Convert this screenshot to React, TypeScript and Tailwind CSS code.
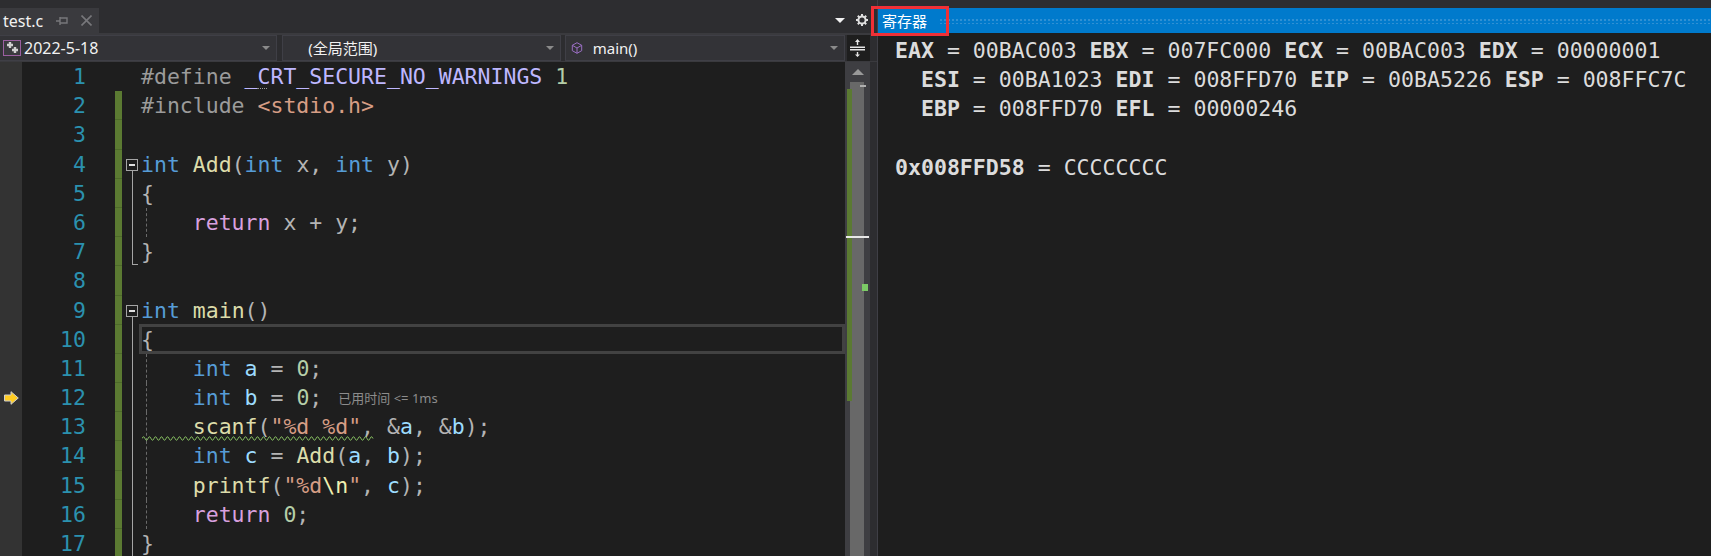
import React from 'react';

type Tok = [string, string];

const KW = 'text-[#569cd6]';
const FN = 'text-[#dcdcaa]';
const VAR = 'text-[#9cdcfe]';
const STR = 'text-[#d69d85]';
const NUM = 'text-[#b5cea8]';
const PRE = 'text-[#9b9b9b]';
const MAC = 'text-[#beb7ff]';
const CTL = 'text-[#d8a0df]';
const PUN = 'text-[#b4b4b4]';

type LineDef = {
  n: number;
  toks: Tok[];
  fold?: 'box' | 'line' | 'end';
  guide?: boolean;
  changed?: boolean;
};

const lines: LineDef[] = [
  { n: 1, toks: [['#define ', PRE], ['_CRT_SECURE_NO_WARNINGS', MAC], [' ', PUN], ['1', NUM]] },
  { n: 2, changed: true, toks: [['#include ', PRE], ['<stdio.h>', STR]] },
  { n: 3, changed: true, toks: [] },
  { n: 4, changed: true, fold: 'box', toks: [['int', KW], [' ', PUN], ['Add', FN], ['(', PUN], ['int', KW], [' x, ', PUN], ['int', KW], [' y)', PUN]] },
  { n: 5, changed: true, fold: 'line', toks: [['{', PUN]] },
  { n: 6, changed: true, fold: 'line', guide: true, toks: [['    ', PUN], ['return', CTL], [' x + y;', PUN]] },
  { n: 7, changed: true, fold: 'end', toks: [['}', PUN]] },
  { n: 8, changed: true, toks: [] },
  { n: 9, changed: true, fold: 'box', toks: [['int', KW], [' ', PUN], ['main', FN], ['()', PUN]] },
  { n: 10, changed: true, fold: 'line', toks: [['{', PUN]] },
  { n: 11, changed: true, fold: 'line', guide: true, toks: [['    ', PUN], ['int', KW], [' ', PUN], ['a', VAR], [' = ', PUN], ['0', NUM], [';', PUN]] },
  { n: 12, changed: true, fold: 'line', guide: true, toks: [['    ', PUN], ['int', KW], [' ', PUN], ['b', VAR], [' = ', PUN], ['0', NUM], [';', PUN]] },
  { n: 13, changed: true, fold: 'line', guide: true, toks: [['    ', PUN], ['scanf', FN], ['(', PUN], ['"%d %d"', STR], [', &', PUN], ['a', VAR], [', &', PUN], ['b', VAR], [');', PUN]] },
  { n: 14, changed: true, fold: 'line', guide: true, toks: [['    ', PUN], ['int', KW], [' ', PUN], ['c', VAR], [' = ', PUN], ['Add', FN], ['(', PUN], ['a', VAR], [', ', PUN], ['b', VAR], [');', PUN]] },
  { n: 15, changed: true, fold: 'line', guide: true, toks: [['    ', PUN], ['printf', FN], ['(', PUN], ['"%d', STR], ['\\n', 'text-[#efefb0]'], ['"', STR], [', ', PUN], ['c', VAR], [');', PUN]] },
  { n: 16, changed: true, fold: 'line', guide: true, toks: [['    ', PUN], ['return', CTL], [' ', PUN], ['0', NUM], [';', PUN]] },
  { n: 17, changed: true, fold: 'line', toks: [['}', PUN]] },
];

const Arrow = () => (
  <svg width="15" height="14" viewBox="0 0 15 14">
    <path d="M0.5 4h6.5V0.7L14.3 7 7 13.3V10H0.5z" fill="#ffcc22" stroke="#cfcfcf" strokeWidth="1" />
  </svg>
);

const FoldCell = ({ fold }: { fold?: LineDef['fold'] }) => (
  <div className="relative w-[17px] shrink-0 self-stretch">
    {fold === 'box' && (
      <>
        <div className="absolute left-[4px] top-[9px] flex h-[12px] w-[12px] items-center justify-center border border-[#a5a5a5]">
          <div className="h-[2px] w-[6px] bg-[#e0e0e0]" />
        </div>
        <div className="absolute bottom-0 left-[10px] top-[21px] w-px bg-[#a5a5a5]" />
      </>
    )}
    {fold === 'line' && <div className="absolute inset-y-0 left-[10px] w-px bg-[#a5a5a5]" />}
    {fold === 'end' && (
      <>
        <div className="absolute left-[10px] top-0 h-[27px] w-px bg-[#a5a5a5]" />
        <div className="absolute left-[10px] top-[27px] h-px w-[6px] bg-[#a5a5a5]" />
      </>
    )}
  </div>
);

const Squiggle = () => (
  <svg className="absolute left-[3px] top-[24px]" width="232" height="5" viewBox="0 0 232 5">
    <path
      d={'M0 2.5' + Array.from({ length: 77 }, (_, i) => ` q1.5 ${i % 2 ? 3.4 : -3.4} 3 0`).join('')}
      fill="none"
      stroke="#8cc665"
      strokeWidth="1"
    />
  </svg>
);

const CodeLine = ({ line }: { line: LineDef }) => (
  <div className="flex h-[29.2px] items-stretch">
    <div className="flex w-[22px] shrink-0 items-center justify-center bg-[#333333]">
      {line.n === 12 && <Arrow />}
    </div>
    <div className="w-[64px] shrink-0 text-right text-[#2b91af]">{line.n}</div>
    <div className="w-[29px] shrink-0" />
    <div className={`w-[7px] shrink-0 ${line.changed ? 'border-b border-[#4d6a2a] bg-[#5b7a32]' : ''}`} />
    <FoldCell fold={line.fold} />
    <div className="relative flex-1 whitespace-pre pl-[2px]">
      {line.guide && (
        <div className="absolute inset-y-0 left-[7px] border-l border-dashed border-[#6a6a6a]" />
      )}
      {line.n === 10 && (
        <div className="absolute inset-x-0 top-[-1px] h-[30px] border-[3px] border-[#424242]" />
      )}
      {line.toks.map(([t, c], i) => (
        <span key={i} className={`relative ${c}`}>
          {t}
        </span>
      ))}
      {line.n === 1 && (
        <div className="absolute left-[118px] top-[26px] h-px w-[10px] border-t border-dotted border-[#9a9a9a]" />
      )}
      {line.n === 12 && (
        <span className="ml-[16px] align-[2px] font-['Noto_Sans','Noto_Sans_CJK_SC',sans-serif] text-[13px] text-[#8c8c8c]">
          已用时间 {'<='} 1ms
        </span>
      )}
      {line.n === 13 && <Squiggle />}
    </div>
  </div>
);

const Scrollbar = () => (
  <div className="relative flex h-full w-[25px] shrink-0 flex-col bg-[#3e3e42]">
    <div className="flex h-[20px] items-center justify-center">
      <div className="h-0 w-0 border-x-[6px] border-b-[6px] border-x-transparent border-b-[#999999]" />
    </div>
    <div className="ml-[5px] w-[14px] flex-1 bg-[#686868]" />
    <div className="absolute left-[2px] top-[27px] h-[312px] w-[5px] bg-[#5b7a32]" />
    <div className="absolute left-[1px] top-[174px] h-[2px] w-[23px] bg-[#e8e8e8]" />
    <div className="absolute left-[17px] top-[222px] h-[7px] w-[6px] bg-[#7ccb66]" />
    <div className="absolute left-[15px] top-[23px] h-[2px] w-[6px] bg-[#b0b0b0]" />
  </div>
);

const Caret = () => (
  <div className="h-0 w-0 border-x-[4px] border-t-[4px] border-x-transparent border-t-[#8a8a8a]" />
);

const Combo = ({ className, children }: { className: string; children: React.ReactNode }) => (
  <div className={`flex h-[26px] items-center border border-[#3f3f46] bg-[#333337] pr-[6px] ${className}`}>
    {children}
    <div className="ml-auto">
      <Caret />
    </div>
  </div>
);

const regLines = [
  [['EAX', '00BAC003'], ['EBX', '007FC000'], ['ECX', '00BAC003'], ['EDX', '00000001']],
  [['ESI', '00BA1023'], ['EDI', '008FFD70'], ['EIP', '00BA5226'], ['ESP', '008FFC7C']],
  [['EBP', '008FFD70'], ['EFL', '00000246']],
];

export default function App() {
  return (
    <div className="flex h-[556px] w-[1711px] overflow-hidden bg-[#2d2d30] font-['Noto_Sans','Noto_Sans_CJK_SC',sans-serif] text-[15px] text-[#f1f1f1]">
      {/* 左侧编辑器 */}
      <div className="flex h-full w-[878px] shrink-0 flex-col border-r border-[#3f3f46]">
        <div className="flex h-[33px] shrink-0 items-end pr-[8px]">
          <div className="flex h-[25px] w-[99px] items-center bg-[#3a3a3e] pl-[3px]">
            <span className="text-[16px] leading-none">test.c</span>
            <svg className="ml-[13px]" width="12" height="10" viewBox="0 0 12 10" fill="none" stroke="#77777b" strokeWidth="1.4">
              <path d="M0 5h4M4 1v8M4 2h7v5H4M4 7h7" />
            </svg>
            <svg className="ml-[13px]" width="11" height="11" viewBox="0 0 11 11" stroke="#77777b" strokeWidth="1.6">
              <path d="M0.5 0.5l10 10M10.5 0.5l-10 10" />
            </svg>
          </div>
          <div className="mb-[7px] ml-auto flex items-center gap-[11px]">
            <div className="h-0 w-0 border-x-[5px] border-t-[5px] border-x-transparent border-t-[#f1f1f1]" />
            <svg width="12" height="12" viewBox="0 0 12 12" className="mr-[1px]">
              <circle cx="6" cy="6" r="3.6" fill="none" stroke="#e0e0e0" strokeWidth="2" />
              <path d="M6 0v2.5M6 9.5V12M0 6h2.5M9.5 6H12M1.8 1.8l1.8 1.8M8.4 8.4l1.8 1.8M10.2 1.8L8.4 3.6M3.6 8.4l-1.8 1.8" stroke="#e0e0e0" strokeWidth="2" />
            </svg>
          </div>
        </div>

        <div className="flex h-[29px] shrink-0 items-center border-y border-t-2 border-[#3a3a3e] pr-[7px]">
          <Combo className="w-[278px] border-l-0 pl-[3px]">
            <svg width="18" height="16" viewBox="0 0 18 16" className="shrink-0">
              <rect x="0.5" y="0.5" width="17" height="15" fill="#3a3a3e" stroke="#9b5fa0" />
              <path d="M4 5h6M7 2v6M9 10h6M12 7v6" stroke="#d0d0d0" strokeWidth="2.4" />
            </svg>
            <span className="ml-[3px] text-[16px]">2022-5-18</span>
          </Combo>
          <Combo className="ml-[5px] w-[279px] pl-[25px]">
            <span>(全局范围)</span>
          </Combo>
          <Combo className="ml-[4px] w-[281px] pl-[4px]">
            <svg width="12" height="12" viewBox="0 0 12 12" fill="none" stroke="#9b6fc4" strokeWidth="1" className="ml-[1px] shrink-0">
              <path d="M6 0.7l4.7 2.6v5.4L6 11.3 1.3 8.7V3.3zM1.3 3.3L6 6l4.7-2.7M6 6v5.3" />
            </svg>
            <span className="ml-[10px]">main()</span>
          </Combo>
          <div className="ml-[2px] flex h-[26px] w-[23px] items-center bg-[#1e1e1e] pl-[3px]">
            <svg width="15" height="18" viewBox="0 0 15 18" fill="#e4e4e4">
              <path d="M0 7.5h15V9H0zM0 10h15v1.5H0z" />
              <path d="M7.5 0L10 3H8.2v3H6.8V3H5zM7.5 18L5 15.5h1.8v-2.5h1.4v2.5H10z" />
            </svg>
          </div>
        </div>

        <div className="flex min-h-0 flex-1 bg-[#1e1e1e]">
          <div className="min-w-0 flex-1 overflow-hidden font-['DejaVu_Sans_Mono',monospace] text-[21.5px] leading-[29.2px]">
            {lines.map((l) => (
              <CodeLine key={l.n} line={l} />
            ))}
          </div>
          <Scrollbar />
          <div className="w-[7px] shrink-0 bg-[#2d2d30]" />
        </div>
      </div>

      {/* 寄存器窗口 */}
      <div className="relative flex h-full flex-1 flex-col">
        <div className="mt-[8px] flex h-[25px] shrink-0 items-center bg-[#007acc] pl-[4px]">
          <span className="font-['Noto_Sans_CJK_SC','Noto_Sans',sans-serif] text-[15px] leading-none text-white">寄存器</span>
          <div className="ml-[12px] h-[6px] flex-1 bg-[radial-gradient(circle,#2f90d4_1px,transparent_1.2px)] bg-[length:4px_4px]" />
        </div>
        <div className="absolute left-[-7px] top-[6px] h-[30px] w-[78px] border-[3px] border-[#f03036]" />
        <div className="flex-1 whitespace-pre bg-[#1e1e1e] pl-[17px] pt-[3px] font-['DejaVu_Sans_Mono',monospace] text-[21.55px] leading-[29.2px] text-[#dcdcdc]">
          {regLines.map((row, i) => (
            <div key={i}>
              {i > 0 ? '  ' : ''}
              {row.map(([k, v], j) => (
                <span key={k}>
                  {j > 0 ? ' ' : ''}
                  <b>{k}</b> = {v}
                </span>
              ))}
            </div>
          ))}
          <div className="h-[29.2px]" />
          <div>
            <b>0x008FFD58</b> = CCCCCCCC
          </div>
        </div>
      </div>
    </div>
  );
}
